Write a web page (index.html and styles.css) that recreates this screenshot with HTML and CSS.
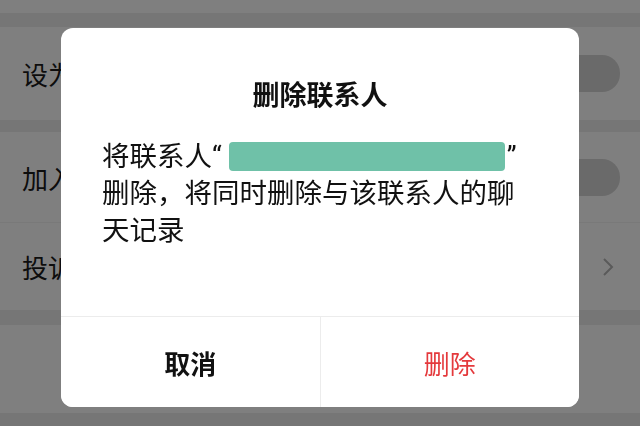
FILE: index.html
```html
<!DOCTYPE html>
<html lang="zh-CN">
<head>
  <meta charset="UTF-8">
  <meta name="viewport" content="width=device-width, initial-scale=1.0">
  <title>删除联系人</title>
  <link rel="stylesheet" href="styles.css">
</head>
<body>
  <div class="page">
    <div class="header"></div>

    <div class="group">
      <div class="row">
        <span class="row-label">设为星标朋友</span>
        <span class="switch"></span>
      </div>
    </div>

    <div class="group">
      <div class="row">
        <span class="row-label">加入黑名单</span>
        <span class="switch"></span>
      </div>
      <div class="row">
        <span class="row-label">投诉</span>
        <svg class="chevron" width="12" height="20" viewBox="0 0 12 20">
          <polyline points="2,2 10,10 2,18" fill="none" stroke="#b4b4b4" stroke-width="2"/>
        </svg>
      </div>
    </div>

    <div class="group group-last"></div>
  </div>

  <div class="mask">
    <div class="dialog">
      <h2 class="dialog-title">删除联系人</h2>
      <p class="dialog-text">将联系人“<span class="name-mask"></span>”删除，将同时删除与该联系人的聊天记录</p>
      <div class="dialog-actions">
        <button class="btn btn-cancel">取消</button>
        <button class="btn btn-danger">删除</button>
      </div>
    </div>
  </div>
</body>
</html>
```

FILE: styles.css
```css
* {
  margin: 0;
  padding: 0;
  box-sizing: border-box;
}

body {
  font-family: Roboto, "Noto Sans CJK SC", sans-serif;
  background: #ececec;
  color: #1a1a1a;
  width: 640px;
  height: 426px;
  overflow: hidden;
}

/* Settings list under the dialog */
.header {
  height: 13px;
  background: #fff;
}

.group {
  background: #fff;
  margin-top: 14px;
}

.group + .group {
  margin-top: 12px;
}

.group-last {
  margin-top: 15px !important;
  height: 88px;
}

.row {
  height: 93px;
  display: flex;
  align-items: center;
  justify-content: space-between;
  padding: 0 20px 0 22px;
  font-size: 26px;
}

.group:nth-child(3) .row {
  height: 90px;
}

.group:nth-child(3) .row + .row {
  height: 88px;
  border-top: 1px solid #f2f2f2;
  padding-right: 26px;
}

.switch {
  width: 60px;
  height: 37px;
  border-radius: 18px;
  background: #d4d4d4;
}

/* Dialog */
.mask {
  position: fixed;
  inset: 0;
  background: rgba(0, 0, 0, 0.5);
  display: flex;
  justify-content: center;
  align-items: flex-start;
  padding-top: 28px;
}

.dialog {
  width: 518px;
  background: #fff;
  border-radius: 12px;
  overflow: hidden;
}

.dialog-title {
  font-size: 27px;
  font-weight: 700;
  line-height: 36px;
  text-align: center;
  color: #111;
  padding-top: 50px;
}

.dialog-text {
  font-size: 27.5px;
  line-height: 37px;
  color: #111;
  padding: 24px 50px 67px 41px;
}

.name-mask {
  display: inline-block;
  width: 276px;
  height: 29px;
  margin: 0 2px 0 7px;
  vertical-align: -5px;
  background: #6fc1a8;
  border-radius: 4px;
}

.dialog-actions {
  display: flex;
  border-top: 1px solid #ececec;
}

.btn {
  flex: 1;
  height: 90px;
  border: none;
  background: #fff;
  font-family: inherit;
  font-size: 26px;
  cursor: pointer;
}

.btn + .btn {
  border-left: 1px solid #ececec;
}

.btn-cancel {
  color: #111;
  font-weight: 700;
}

.btn-danger {
  color: #e4393c;
}
```
